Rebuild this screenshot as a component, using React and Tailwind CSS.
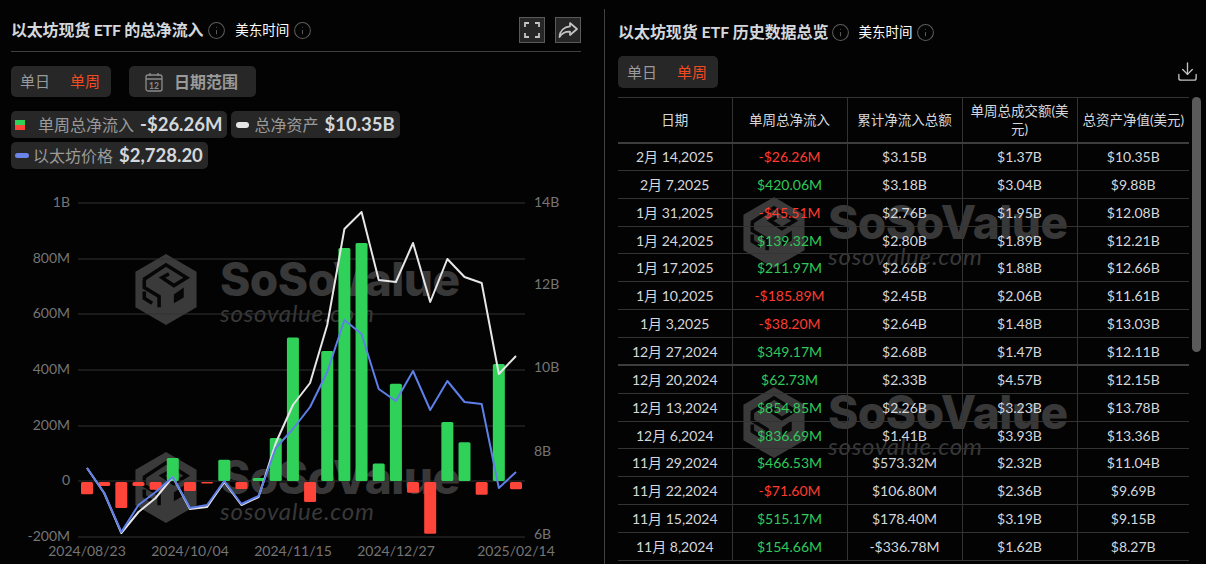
import { Download, Info } from 'lucide-react';

const FONT = 'font-[Lato,"Noto_Sans_CJK_SC",sans-serif]';

const bars = [-44, -14, -93, -14, -28, 83, -32, -5, 76, -25, 11, 154.66, 515.17, -71.6, 466.53, 836.69, 854.85, 62.73, 349.17, -38.2, -185.89, 211.97, 139.32, -45.51, 420.06, -26.26];
const whiteLine = [468, 493, 533, 512, 498, 477, 509, 507, 482, 505, 497, 443, 405, 383, 325, 229, 212, 280, 282, 243, 302, 259, 277, 283, 374, 356];
const blueLine = [468, 493, 532, 505, 492, 477, 508, 505, 481, 504, 496, 448, 429, 407, 372, 320, 334, 389, 401, 371, 410, 381, 402, 404, 488, 472];
const xAt = (i) => 87 + i * 17.16;
const toPoints = (ys) => ys.map((y, i) => `${xAt(i)},${y}`).join(' ');

const leftAxis = [['1B', 203], ['800M', 259], ['600M', 314], ['400M', 370], ['200M', 426], ['0', 481], ['-200M', 537]];
const rightAxis = [['14B', 203], ['12B', 285], ['10B', 368], ['8B', 452], ['6B', 535]];
const dates = [['2024/08/23', 87], ['2024/10/04', 190], ['2024/11/15', 293], ['2024/12/27', 396], ['2025/02/14', 516]];

const rows = [
  ['2月 14,2025', '-$26.26M', '$3.15B', '$1.37B', '$10.35B'],
  ['2月 7,2025', '$420.06M', '$3.18B', '$3.04B', '$9.88B'],
  ['1月 31,2025', '-$45.51M', '$2.76B', '$1.95B', '$12.08B'],
  ['1月 24,2025', '$139.32M', '$2.80B', '$1.89B', '$12.21B'],
  ['1月 17,2025', '$211.97M', '$2.66B', '$1.88B', '$12.66B'],
  ['1月 10,2025', '-$185.89M', '$2.45B', '$2.06B', '$11.61B'],
  ['1月 3,2025', '-$38.20M', '$2.64B', '$1.48B', '$13.03B'],
  ['12月 27,2024', '$349.17M', '$2.68B', '$1.47B', '$12.11B'],
  ['12月 20,2024', '$62.73M', '$2.33B', '$4.57B', '$12.15B'],
  ['12月 13,2024', '$854.85M', '$2.26B', '$3.23B', '$13.78B'],
  ['12月 6,2024', '$836.69M', '$1.41B', '$3.93B', '$13.36B'],
  ['11月 29,2024', '$466.53M', '$573.32M', '$2.32B', '$11.04B'],
  ['11月 22,2024', '-$71.60M', '$106.80M', '$2.36B', '$9.69B'],
  ['11月 15,2024', '$515.17M', '$178.40M', '$3.19B', '$9.15B'],
  ['11月 8,2024', '$154.66M', '-$336.78M', '$1.62B', '$8.27B'],
];

const Logo = () => (
  <svg viewBox="0 0 62 72" className="h-[71px] w-[62px]">
    <polygon points="31,0 62,18 62,54 31,72 0,54 0,18" fill="#3a3a3a" />
    <g fill="none" stroke="#060606" strokeWidth="3.6">
      <polyline points="8,26 31,11 52,24 39,32 27,24 34,20" />
      <polyline points="9,26 9,34 24,43 24,54" />
      <polyline points="9,38 9,45 17,50" />
    </g>
    <polygon points="39,41 49,34 49,44 39,50" fill="#060606" />
  </svg>
);

const Watermark = ({ className }) => (
  <div className={`pointer-events-none absolute flex items-start gap-[23px] ${className}`}>
    <Logo />
    <div className="mt-[2px] flex flex-col">
      <span className="font-['Inter'] text-[46px] leading-[46px] font-extrabold tracking-[-0.5px] text-[#383838]">SoSoValue</span>
      <span className="font-['Lato'] text-[24px] leading-[22px] tracking-[0.8px] text-[#383838] italic">sosovalue.com</span>
    </div>
  </div>
);

const InfoIcon = () => <Info size={19} strokeWidth={1.3} className="text-[#5c5c5c]" />;

const Tabs = () => (
  <div className="flex h-full w-[100px] items-center gap-[20px] rounded-[5px] bg-[#272727] pl-[9px] text-[15px] text-[#9a9a9a]">
    <span>单日</span>
    <span className="text-[#f04a23]">单周</span>
  </div>
);

const Legend = ({ icon, label, value }) => (
  <div className="flex h-[27px] items-center rounded-[5px] bg-[#272727] pr-[5px] pl-[4px]">
    {icon}
    <span className="text-[#9a9a9a]">{label}</span>
    <span className="ml-[6px] text-[18.500px] font-bold text-[#d4d8dc]">{value}</span>
  </div>
);

const Chart = () => (
  <div className="relative -ml-[11px] h-[374px] w-[600px]">
    <Watermark className="top-[64px] left-[135px]" />
    <Watermark className="top-[262px] left-[135px]" />
    <svg viewBox="0 190 600 374" className="absolute inset-0 h-[374px] w-[600px]">
      {leftAxis.map(([label, y]) => (
        <line key={label} x1="78" x2="525" y1={y} y2={y} stroke="#333333" strokeWidth="1" />
      ))}
      {bars.map((v, i) => {
        const h = Math.abs(v) * 0.2785;
        return (
          <rect
            key={i}
            x={xAt(i) - 6}
            y={v > 0 ? 481 - h : 482}
            width="12"
            height={h}
            rx="1.5"
            fill={v > 0 ? '#30d158' : '#ff453a'}
          />
        );
      })}
      <polyline points={toPoints(whiteLine)} fill="none" stroke="#e6e6e6" strokeWidth="2" strokeLinejoin="round" />
      <polyline points={toPoints(blueLine)} fill="none" stroke="#5f7fe8" strokeWidth="2" strokeLinejoin="round" />
      <g fill="#757575" fontSize="14" fontFamily="Lato, sans-serif">
        {leftAxis.map(([label, y]) => (
          <text key={label} x="70" y={y + 4} textAnchor="end">{label}</text>
        ))}
        {rightAxis.map(([label, y]) => (
          <text key={label} x="534" y={y + 4}>{label}</text>
        ))}
        {dates.map(([label, x]) => (
          <text key={label} x={x} y="556" textAnchor="middle">{label}</text>
        ))}
      </g>
    </svg>
  </div>
);

const LeftPanel = () => (
  <section className="w-[604px] shrink-0 pr-[23px] pl-[11px]">
    <header className="mt-[9px] flex h-[43px] items-center justify-between border-b border-[#404040]">
      <div className="flex items-center">
        <h1 className="text-[16px] font-bold tracking-[-0.2px] text-[#d4d8dc]">以太坊现货 ETF 的总净流入</h1>
        <span className="ml-[4px]"><InfoIcon /></span>
        <span className="ml-[9px] text-[13.500px] text-white">美东时间</span>
        <span className="ml-[4px]"><InfoIcon /></span>
      </div>
      <div className="flex items-center gap-[10px]">
        <button className="flex h-[26px] w-[26px] items-center justify-center border border-[#5a5a5a] bg-[#262626]">
          <svg viewBox="0 0 16 16" className="h-[16px] w-[16px]" fill="none" stroke="#c4c4c4" strokeWidth="1.8">
            <path d="M1 5V1h4M11 1h4v4M15 11v4h-4M5 15H1v-4" />
          </svg>
        </button>
        <button className="flex h-[26px] w-[26px] items-center justify-center border border-[#5a5a5a] bg-[#262626]">
          <svg viewBox="0 0 20 18" className="h-[18px] w-[20px]" fill="none" stroke="#c4c4c4" strokeWidth="1.7" strokeLinejoin="round">
            <path d="M12 2l7 6-7 6v-3.400C7.500 10.400 4 12 1.500 16 1.800 10 6 6 12 5.400z" />
          </svg>
        </button>
      </div>
    </header>
    <div className="mt-[14px] flex h-[31px] gap-[18px]">
      <Tabs />
      <div className="flex w-[127px] items-center rounded-[5px] bg-[#272727] pl-[16px] text-[16px] font-bold text-[#9a9a9a]">
        <svg viewBox="0 0 18 20" className="h-[20px] w-[18px]" fill="none" stroke="#8c8c8c" strokeWidth="1.3">
          <rect x="1" y="3" width="16" height="16" rx="2" />
          <path d="M1 7h16M5 1v3M13 1v3" />
          <text x="9" y="16.500" textAnchor="middle" fontSize="8.500" fill="#8c8c8c" stroke="none" fontFamily="Lato, sans-serif">12</text>
        </svg>
        <span className="ml-[11px]">日期范围</span>
      </div>
    </div>
    <div className="mt-[14px] flex flex-wrap gap-x-[4px] gap-y-[4px] text-[16px]">
      <Legend
        label="单周总净流入"
        value="-$26.26M"
        icon={
          <span className="mr-[13px] flex h-[10px] w-[10px] flex-col">
            <span className="h-1/2 bg-[#30d158]" />
            <span className="h-1/2 bg-[#ff453a]" />
          </span>
        }
      />
      <Legend
        label="总净资产"
        value="$10.35B"
        icon={<span className="mr-[5px] ml-[1px] h-[6px] w-[13px] rounded-full bg-[#e6e6e6]" />}
      />
      <Legend
        label="以太坊价格"
        value="$2,728.20"
        icon={<span className="mr-[4px] h-[5px] w-[14px] rounded-full bg-[#6a84e8]" />}
      />
    </div>
    <div className="mt-[21px]">
      <Chart />
    </div>
  </section>
);

const RightPanel = () => (
  <section className="relative mt-[9px] flex-1 border-l border-[#404040] pl-[13px]">
    <Watermark className="top-[188px] left-[138px]" />
    <Watermark className="top-[378px] left-[138px]" />
    <div className="relative flex h-[46px] items-center">
      <h2 className="text-[16px] font-bold tracking-[-0.05px] text-[#d4d8dc]">以太坊现货 ETF 历史数据总览</h2>
      <span className="ml-[3px]"><InfoIcon /></span>
      <span className="ml-[8px] text-[13.500px] text-white">美东时间</span>
      <span className="ml-[4px]"><InfoIcon /></span>
    </div>
    <div className="relative mt-[1px] flex h-[32px] items-start justify-between pr-[7px]">
      <Tabs />
      <Download size={23} strokeWidth={1.4} className="mt-[4px] text-[#c4c4c4]" />
    </div>
    <div className="relative mt-[9px] flex">
      <table className="w-[571px] table-fixed border-collapse border-t border-[#333333] text-center text-[14px] text-[#d4d8dc]">
        <colgroup>
          <col className="w-[114px]" />
          <col className="w-[115px]" />
          <col className="w-[115px]" />
          <col className="w-[115px]" />
          <col className="w-[112px]" />
        </colgroup>
        <thead>
          <tr className="h-[45px] border-b-[2px] border-[#3d3d3d] text-[13.500px] leading-[18px]">
            {['日期', '单周总净流入', '累计净流入总额', '单周总成交额(美元)', '总资产净值(美元)'].map((h, i) => (
              <th key={h} className={`px-0 font-normal ${i < 4 ? 'border-r border-[#333333]' : ''}`}>{h}</th>
            ))}
          </tr>
        </thead>
        <tbody>
          {rows.map((row, r) => (
            <tr key={row[0]} className={`h-[27.860px] ${r === 7 ? 'border-b-[2px] border-[#3d3d3d]' : 'border-b border-[#333333]'}`}>
              {row.map((cell, i) => (
                <td
                  key={i}
                  className={`p-0 ${i < 4 ? 'border-r border-[#333333]' : ''} ${i === 1 ? (cell.startsWith('-') ? 'text-[#ff3b30]' : 'text-[#30c95a]') : ''}`}
                >
                  {cell}
                </td>
              ))}
            </tr>
          ))}
        </tbody>
      </table>
      <div className="ml-[3px] h-[255px] w-[9px] rounded-full bg-[#5a5a5a]" />
    </div>
  </section>
);

export default function App() {
  return (
    <div className={`flex h-[564px] w-[1206px] overflow-hidden bg-[#030303] ${FONT}`}>
      <LeftPanel />
      <RightPanel />
    </div>
  );
}
